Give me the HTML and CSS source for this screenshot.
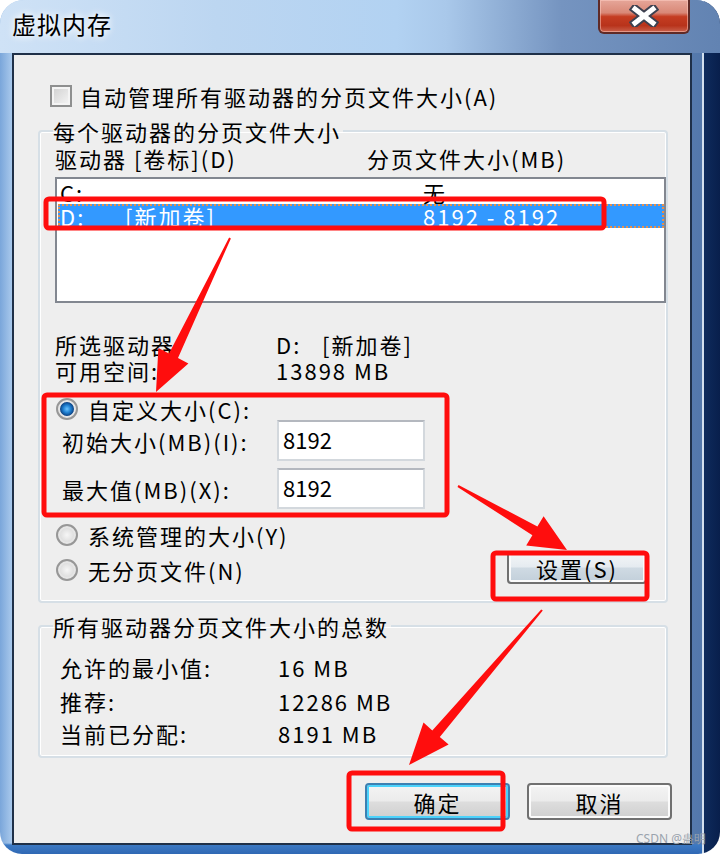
FILE: index.html
```html
<!doctype html>
<html>

<head>
    <title>虚拟内存</title>
    <meta charset="utf-8" />
    <link rel="stylesheet" href="styles.css">
</head>

<body>
    <div class="window">
        <div class="titlebar">
            <span class="title">虚拟内存</span>
            <div class="close">
                <svg width="30" height="22" viewBox="0 0 30 22">
                    <path d="M6 4 L24 18 M24 4 L6 18" stroke="#3d4150" stroke-width="9" stroke-linecap="square" />
                    <path d="M6 4 L24 18 M24 4 L6 18" stroke="#ffffff" stroke-width="5" stroke-linecap="square" />
                </svg>
            </div>
        </div>

        <div class="client">
            <div class="check-row"><span class="checkbox"></span>自动管理所有驱动器的分页文件大小(A)</div>

            <fieldset class="group drives">
                <legend>每个驱动器的分页文件大小</legend>
                <div class="list-head"><span>驱动器 [卷标](D)</span><span>分页文件大小(MB)</span></div>
                <div class="listbox">
                    <div class="item"><span>C:</span><span></span><span>无</span></div>
                    <div class="item selected"><span>D:</span><span>[新加卷]</span><span>8192 - 8192</span></div>
                </div>
                <div class="info">
                    <span>所选驱动器:</span><span>D:   [新加卷]</span>
                    <span>可用空间:</span><span>13898 MB</span>
                </div>
                <div class="radio-row first"><span class="radio checked"></span>自定义大小(C):</div>
                <div class="field-row"><span>初始大小(MB)(I):</span><div class="textbox">8192</div></div>
                <div class="field-row second"><span>最大值(MB)(X):</span><div class="textbox">8192</div></div>
                <div class="radio-row"><span class="radio"></span>系统管理的大小(Y)</div>
                <div class="radio-row last"><span class="radio"></span>无分页文件(N)<button class="btn set">设置(S)</button></div>
            </fieldset>

            <fieldset class="group totals">
                <legend>所有驱动器分页文件大小的总数</legend>
                <div class="totals-grid">
                    <span>允许的最小值:</span><span>16 MB</span>
                    <span>推荐:</span><span>12286 MB</span>
                    <span>当前已分配:</span><span>8191 MB</span>
                </div>
            </fieldset>

            <div class="buttons">
                <button class="btn default">确定</button>
                <button class="btn">取消</button>
            </div>
        </div>

        <div class="watermark">CSDN @蛊明</div>

        <!-- red annotations drawn over the dialog -->
        <svg class="marks" width="720" height="854" viewBox="0 0 720 854">
            <g fill="none" stroke="#ff0d0d" stroke-width="5">
                <rect x="46" y="199" width="558" height="29" rx="3" />
                <rect x="44" y="395" width="403" height="120" rx="3" />
                <rect x="493" y="553" width="154" height="46" rx="3" />
                <rect x="349" y="773" width="154" height="56" rx="3" />
            </g>
            <g fill="#ff0d0d">
                <polygon points="230.9,238.4 178,357.9 188.4,363.5 156,392 158.4,348 169,353.6 229.1,237.6" />
                <polygon points="457.5,486.9 532.4,535.2 526.2,545.5 567,550 543.6,516.3 537.4,526.5 458.5,485.1" />
                <polygon points="542.8,610.6 439.8,736.9 448.6,744.6 409,765 423.5,722.6 432.3,730.4 541.2,609.4" />
            </g>
        </svg>
    </div>
</body>

</html>
```

FILE: styles.css
```css
body { margin: 0; background: #ffffff; font-family: "Noto Sans CJK SC", "Noto Sans", sans-serif; font-size: 22px; letter-spacing: 2px; line-height: 24px; color: #000; }

.window { position: relative; width: 720px; height: 854px; box-sizing: border-box; border-radius: 24px 24px 22px 22px; overflow: hidden; display: flex; flex-direction: column;
    background:
        linear-gradient(to right, transparent 702px, #d3e0ee 702px, #d3e0ee 704px, #0e2b5c 704px, #081f4c 720px),
        linear-gradient(to top, #2f68b4 0, #3c79c3 9px, transparent 11px),
        linear-gradient(to right, #7aa6da 0, #a9c9ec 12px, #b4d0ee 50%, #6f90bd 80%, #4f74a8 100%); }

.titlebar { height: 53px; display: flex; align-items: flex-start; padding: 0 30px 0 12px; flex-shrink: 0;
    background: linear-gradient(to right, #cfe2f6 0, #bcd6f1 30%, #b2d2f2 55%, #a9c8ea 62%, #7594c0 78%, #6283b2 100%); }
.title { margin-top: 12px; font-size: 24px; letter-spacing: 1px; text-shadow: 0 0 6px #fff, 0 0 10px #fff; }
.close { margin-left: auto; width: 92px; height: 34px; box-sizing: border-box; display: flex; align-items: center; justify-content: center; border: 2px solid #5f2a26; border-top: 0; border-radius: 0 0 6px 6px;
    background: linear-gradient(#e6a699 0, #d98877 40%, #c53d22 52%, #b8331b 80%, #c9614c 100%); box-shadow: inset 0 0 0 1px rgba(255, 210, 200, 0.5); }

.client { flex: 1; margin: 0 28px 9px 12px; border: 2px solid #1f3048; background: #eeeeee; padding-top: 29px; position: relative; }

.check-row { display: flex; align-items: center; height: 24px; padding-left: 36px; }
.checkbox { width: 22px; height: 22px; box-sizing: border-box; border: 2px solid #8e8f8f; margin-right: 8px; background: linear-gradient(135deg, #cfcfcf, #f6f6f6); box-shadow: inset 0 0 0 2px #f4f4f4; }

.group { margin: 11px 0 0 24px; width: 630px; box-sizing: border-box; border: 2px solid #d6dfe6; border-radius: 4px; padding: 3px 0 0 15px; min-width: 0; box-shadow: inset 0 0 0 1px #ffffff; }
.group legend { padding: 0 2px 0 0; margin-left: -2px; }

.list-head { display: grid; grid-template-columns: 312px 1fr; height: 24px; }
.listbox { width: 611px; height: 126px; box-sizing: border-box; margin-top: 7px; border: 2px solid #828790; background: #ffffff; padding: 1px 0 0 1px; }
.item { display: grid; grid-template-columns: 65px 298px 1fr; height: 24px; padding-left: 2px; }
.item.selected { background: #3399ff; color: #ffffff; outline: 2px dotted #e8904c; outline-offset: -2px; }

.info { display: grid; grid-template-columns: 221px 1fr; grid-auto-rows: 26px; margin-top: 29px; white-space: pre; }

.radio-row { display: flex; align-items: center; height: 24px; margin-top: 14px; }
.radio-row.first { height: 21px; margin-top: 14px; }
.radio-row.last { height: 33px; margin-top: 6px; }
.radio { width: 22px; height: 22px; box-sizing: border-box; border-radius: 50%; border: 2px solid #979797; margin: 0 10px 0 1px; background: radial-gradient(circle, #f6f6f6 0, #d8d8d8 70%); box-shadow: inset 0 0 0 2px #e6e6e6; }
.radio.checked { background: radial-gradient(circle, #6cc4ff 0, #1f7fd0 30%, #0b3f80 55%, #dcdcdc 60%, #f0f0f0 100%); }

.field-row { display: grid; grid-template-columns: 215px 148px; align-items: center; height: 41px; padding-left: 7px; margin-top: 1px; }
.field-row.second { margin-top: 7px; }
.textbox { height: 41px; box-sizing: border-box; border: 2px solid #d3d8dd; border-top-color: #b4b8bf; background: #ffffff; padding: 5px 4px; letter-spacing: 0; }

.btn { font: inherit; letter-spacing: 2px; line-height: 24px; color: #000; width: 145px; height: 37px; border: 2px solid #707070; border-radius: 4px; padding: 0;
    background: linear-gradient(#f4f4f4 0, #ebebeb 48%, #dddddd 52%, #cfcfcf 100%); box-shadow: inset 0 0 0 2px #fbfbfb; }
.btn.set { width: 140px; height: 33px; margin: -4px 19px 0 auto; background: linear-gradient(#f4f6f8 0, #e5ebf0 48%, #cfdae3 52%, #c2cfda 100%); }
.btn.default { border-color: #3c7fb1; box-shadow: inset 0 0 0 2px #4cd2fb; }

.group.drives { padding-bottom: 15px; }
.group.totals { padding-bottom: 11px; }
.totals-grid { display: grid; grid-template-columns: 218px 1fr; grid-template-rows: 34px 32px 24px; padding: 14px 0 0 5px; }

.buttons { display: flex; justify-content: flex-end; gap: 17px; padding-right: 18px; margin-top: 25px; }

.watermark { position: absolute; right: 14px; bottom: 8px; font-family: "Noto Sans", sans-serif; font-size: 12px; letter-spacing: 0; line-height: 14px; color: #9aa3ad; }

.marks { position: absolute; left: 0; top: 0; pointer-events: none; }
```
